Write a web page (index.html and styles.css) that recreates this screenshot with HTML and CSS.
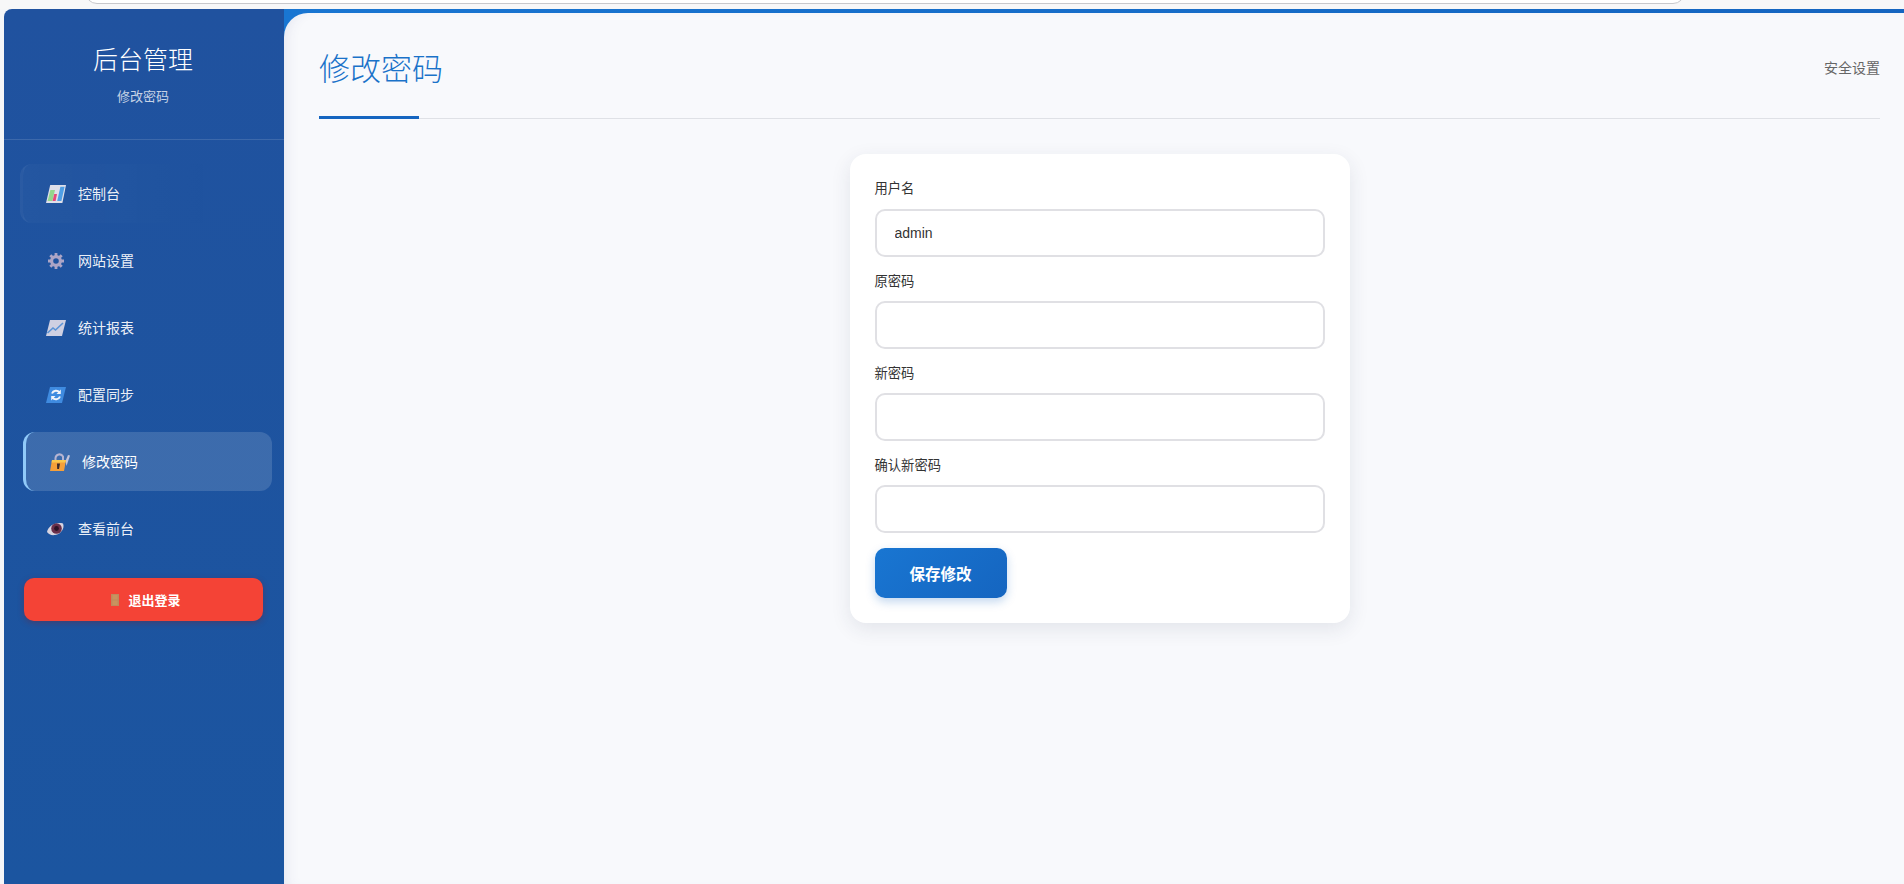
FILE: index.html
```html
<!DOCTYPE html>
<html lang="zh-CN">
<head>
    <meta charset="UTF-8">
    <meta name="viewport" content="width=device-width, initial-scale=1.0">
    <title>修改密码</title>
    <link rel="stylesheet" href="styles.css">
</head>
<body>
    <div class="topbar"><div class="urlbar"></div></div>
    <div class="layout">
        <aside class="sidebar">
            <div class="brand">
                <h1>后台管理</h1>
                <p>修改密码</p>
            </div>
            <nav class="menu">
                <a class="menu-item first">
                    <svg class="icon" viewBox="0 0 20 20">
                        <path d="M4.2 1H20L16.4 19H0Z" fill="#dfe0ea"/>
                        <path d="M1.6 17L4.4 6H9L6.4 17Z" fill="#93d78c"/>
                        <path d="M6.6 17L8.2 10H11L9.6 17Z" fill="#e6497c"/>
                        <path d="M11.2 17L14.4 2.8H18.6L15.4 17Z" fill="#4f9fe6"/>
                    </svg>
                    <span>控制台</span>
                </a>
                <a class="menu-item">
                    <svg class="icon" viewBox="0 0 20 20">
                        <circle cx="10" cy="10" r="4.4" fill="none" stroke="#aca5c6" stroke-width="3.2"/>
                        <path d="M10 2V5.5M10 14.5V18M2 10H5.5M14.5 10H18M4.3 4.3L6.8 6.8M13.2 13.2L15.7 15.7M15.7 4.3L13.2 6.8M6.8 13.2L4.3 15.7" stroke="#aca5c6" stroke-width="2.8"/>
                    </svg>
                    <span>网站设置</span>
                </a>
                <a class="menu-item">
                    <svg class="icon" viewBox="0 0 20 20">
                        <path d="M4 2H20L16 18H0Z" fill="#cfd0e2"/>
                        <path d="M1.5 15L7 10L9.5 12L17 5" fill="none" stroke="#5b93d6" stroke-width="1.6"/>
                    </svg>
                    <span>统计报表</span>
                </a>
                <a class="menu-item">
                    <svg class="icon" viewBox="0 0 20 20">
                        <path d="M4 2H20L16 18H0Z" fill="#3f8be0"/>
                        <path d="M6 8.5A4.3 4.3 0 0 1 13.5 7.5M14 11.5A4.3 4.3 0 0 1 6.5 12.5" fill="none" stroke="#f2f4fa" stroke-width="2"/>
                        <path d="M14.8 4.5V9H10.5Z M5.2 15.5V11H9.5Z" fill="#f2f4fa"/>
                    </svg>
                    <span>配置同步</span>
                </a>
                <a class="menu-item active">
                    <svg class="icon" viewBox="0 0 20 20">
                        <path d="M5.5 9V6A4 4 0 0 1 13 4.5V9" fill="none" stroke="#b5b4d2" stroke-width="2"/>
                        <path d="M15.5 9L18 3L20 3.5L16.5 14Z" fill="#c5c4da"/>
                        <path d="M2 8H16L14 19H0Z" fill="#f5a03a"/>
                        <path d="M2 8H16L15.5 10.5H1.5Z" fill="#fbc84c"/>
                        <path d="M7 11.5H10L9 17H7.2Z" fill="#3b2a2a"/>
                    </svg>
                    <span>修改密码</span>
                </a>
                <a class="menu-item">
                    <svg class="icon" viewBox="0 0 20 20">
                        <path d="M1 13C2 7 10 2.5 17 4.5C19 9 15 15.5 9 16C5.5 16.5 2.5 15.5 1 13Z" fill="#d8d4e0"/>
                        <circle cx="10.5" cy="9.5" r="5.3" fill="#6a2f4a"/>
                        <circle cx="10.5" cy="9.5" r="2.4" fill="#2c1326"/>
                    </svg>
                    <span>查看前台</span>
                </a>
            </nav>
            <a class="logout">
                <svg class="door" viewBox="0 0 8 12">
                    <rect width="8" height="12" fill="#c08a5c"/>
                    <rect x="1.5" y="1" width="5" height="4.5" fill="#c9945f"/>
                    <rect x="1.5" y="6.5" width="5" height="4.5" fill="#c9945f"/>
                </svg>
                <span>退出登录</span>
            </a>
        </aside>
        <div class="main-wrap">
            <main class="content">
                <div class="page-head">
                    <h2>修改密码</h2>
                    <span class="crumb">安全设置</span>
                </div>
                <form class="card">
                    <label class="field-label">用户名</label>
                    <input class="field" type="text" value="admin">
                    <label class="field-label">原密码</label>
                    <input class="field" type="password">
                    <label class="field-label">新密码</label>
                    <input class="field" type="password">
                    <label class="field-label">确认新密码</label>
                    <input class="field" type="password">
                    <button class="save" type="button">保存修改</button>
                </form>
            </main>
        </div>
    </div>
</body>
</html>
```

FILE: styles.css
```css
* {
    box-sizing: border-box;
}
html, body {
    height: 100%;
    margin: 0;
}
body {
    display: flex;
    flex-direction: column;
    overflow: hidden;
    background: #f5f6f8;
    font-family: "Liberation Sans", "Noto Sans CJK SC", sans-serif;
    color: #333;
}
.topbar {
    flex: 0 0 9px;
    overflow: hidden;
    background: #f7f7f8;
}
.urlbar {
    width: 1600px;
    height: 24px;
    margin: -20px 0 0 85px;
    background: #fff;
    border: 1px solid #c8c8cc;
    border-radius: 12px;
}
.layout {
    flex: 1;
    display: flex;
    padding-left: 4px;
    min-height: 0;
}
.sidebar {
    flex: 0 0 280px;
    background: linear-gradient(180deg, #20529f 0%, #1b55a0 100%);
    border-radius: 8px 0 0 0;
    color: #fff;
}
.brand {
    height: 131px;
    padding: 36px 2px 0 0;
    text-align: center;
    border-bottom: 1px solid rgba(255, 255, 255, 0.13);
}
.brand h1 {
    margin: 0;
    font-size: 25px;
    font-weight: 300;
    line-height: 30px;
}
.brand p {
    margin: 13px 0 0;
    font-size: 13px;
    line-height: 18px;
    color: rgba(255, 255, 255, 0.75);
}
.menu {
    display: flex;
    flex-direction: column;
    gap: 8px;
    padding: 24px 16px 0;
}
.menu-item {
    display: flex;
    align-items: center;
    gap: 12px;
    height: 59px;
    padding: 0 23px;
    border-left: 3px solid transparent;
    border-radius: 12px;
    font-size: 14px;
    color: rgba(255, 255, 255, 0.93);
}
.menu-item span {
    position: relative;
    top: -1px;
}
.menu-item.first {
    background: linear-gradient(90deg, rgba(255, 255, 255, 0.025), rgba(255, 255, 255, 0) 80%);
    border-left-color: rgba(255, 255, 255, 0.05);
}
.menu-item.active {
    transform: translateX(4px);
    margin-left: -1px;
    padding-left: 24px;
    background: rgba(255, 255, 255, 0.14);
    border-left-color: #90caf9;
    color: #fff;
}
.icon {
    flex: 0 0 20px;
    width: 20px;
    height: 20px;
}
.logout {
    display: flex;
    align-items: center;
    justify-content: center;
    gap: 9px;
    width: 239px;
    height: 43px;
    margin: 20px 0 0 20px;
    padding-left: 5px;
    background: #f44336;
    border-radius: 10px;
    box-shadow: 0 2px 6px rgba(120, 30, 40, 0.4);
    font-size: 13px;
    font-weight: 700;
    color: #fff;
}
.door {
    width: 8px;
    height: 12px;
}
.main-wrap {
    flex: 1;
    min-width: 0;
    padding-top: 4px;
    background: linear-gradient(90deg, #1976d2, #1565c0);
}
.content {
    height: 100%;
    padding: 0 24px 0 35px;
    background: #f8f9fc;
    border-radius: 24px 0 0 0;
    box-shadow: inset 10px 0 14px -8px rgba(60, 60, 130, 0.1);
}
.page-head {
    display: flex;
    justify-content: space-between;
    align-items: center;
    position: relative;
    height: 106px;
    padding-top: 2px;
    border-bottom: 1px solid #dfe1e6;
}
.page-head h2 {
    margin: 0;
    font-size: 31px;
    font-weight: 300;
    color: #1a72c9;
}
.page-head::after {
    content: "";
    position: absolute;
    left: 0;
    bottom: -1px;
    width: 100px;
    height: 3px;
    background: #1565c0;
}
.crumb {
    font-size: 14px;
    color: #666;
}
.card {
    display: flex;
    flex-direction: column;
    align-items: flex-start;
    width: 500px;
    height: 469px;
    margin: 35px auto 0;
    padding: 24px 25px;
    background: #fff;
    border-radius: 16px;
    box-shadow: 0 6px 20px rgba(40, 50, 80, 0.1);
}
.field-label {
    height: 22px;
    margin-bottom: 8px;
    font-size: 13.3px;
    line-height: 22px;
    color: #333;
}
.field-label:first-child {
    margin-bottom: 9px;
}
.field {
    width: 450px;
    height: 48px;
    margin-bottom: 14px;
    padding: 0 18px;
    border: 2px solid #e0e0e4;
    border-radius: 10px;
    background: #fff;
    font-family: inherit;
    font-size: 14px;
    color: #333;
    outline: none;
}
.save {
    width: 132px;
    height: 50px;
    margin-top: 1px;
    border: none;
    border-radius: 10px;
    background: linear-gradient(135deg, #1976d2, #1565c0);
    box-shadow: 0 4px 10px rgba(21, 101, 192, 0.25);
    font-family: inherit;
    font-size: 15.5px;
    font-weight: 700;
    color: #fff;
}
```
